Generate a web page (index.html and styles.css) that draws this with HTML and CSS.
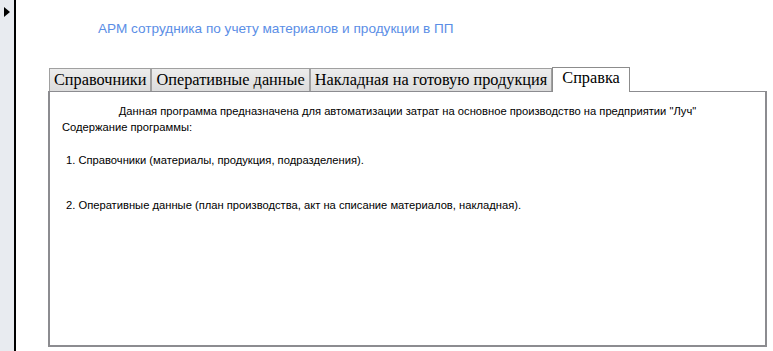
FILE: index.html
```html
<!DOCTYPE html>
<html lang="ru">
<head>
<meta charset="UTF-8">
<title>АРМ сотрудника</title>
<link rel="stylesheet" href="styles.css">
</head>
<body>
<div class="selector"><span class="arrow"></span></div>
<div class="form">
  <div class="title">АРМ сотрудника по учету материалов и продукции в ПП</div>
  <div class="tabs">
    <div class="tab">Справочники</div>
    <div class="tab">Оперативные данные</div>
    <div class="tab">Накладная на готовую продукция</div>
    <div class="tab active">Справка</div>
  </div>
  <div class="page">
    <p class="intro">Данная программа предназначена для автоматизации затрат на основное производство на предприятии "Луч"</p>
    <p class="head">Содержание программы:</p>
    <p class="item first">1. Справочники (материалы, продукция, подразделения).</p>
    <p class="item">2. Оперативные данные (план производства, акт на списание материалов, накладная).</p>
  </div>
</div>
</body>
</html>
```

FILE: styles.css
```css
*{margin:0;padding:0;box-sizing:border-box}
body{width:773px;height:351px;display:flex;background:#fff;overflow:hidden;font-family:'Liberation Sans',Arial,sans-serif}
.selector{width:16px;background:#e8ebf0;border-right:2px solid #000;flex-shrink:0;padding:7px 0 0 4px}
.arrow{display:block;width:0;height:0;border-top:5px solid transparent;border-bottom:5px solid transparent;border-left:6px solid #000}
.form{flex:1;padding:0 0 4px 32px;display:flex;flex-direction:column}
.title{color:#5b8ee6;font-size:13.6px;padding:21px 0 0 50px;height:66px}
.tabs{display:flex;align-items:flex-end;padding-left:1px;height:25px}
.tab{font-family:'Liberation Serif','Times New Roman',serif;font-size:16.3px;color:#000;background:linear-gradient(#ececec,#dcdcdc);border:1px solid #a0a0a0;border-bottom:none;height:23px;line-height:22px;padding:0 4px}
.tab.active{background:#fff;height:25px;line-height:20px;padding:0 9px;margin-bottom:-1px;position:relative;z-index:1;border-color:#8c8c8c}
.page{flex:1;width:719px;border:2px solid #8c8c90;border-top-width:1px;font-size:11.2px;color:#000;padding:13px 0 0 12px}
.intro{text-align:center;padding-right:12px}
.head{margin-top:4px}
.item{padding-left:4px}
.item.first{margin-top:21px}
.item+.item{margin-top:33px}
```
